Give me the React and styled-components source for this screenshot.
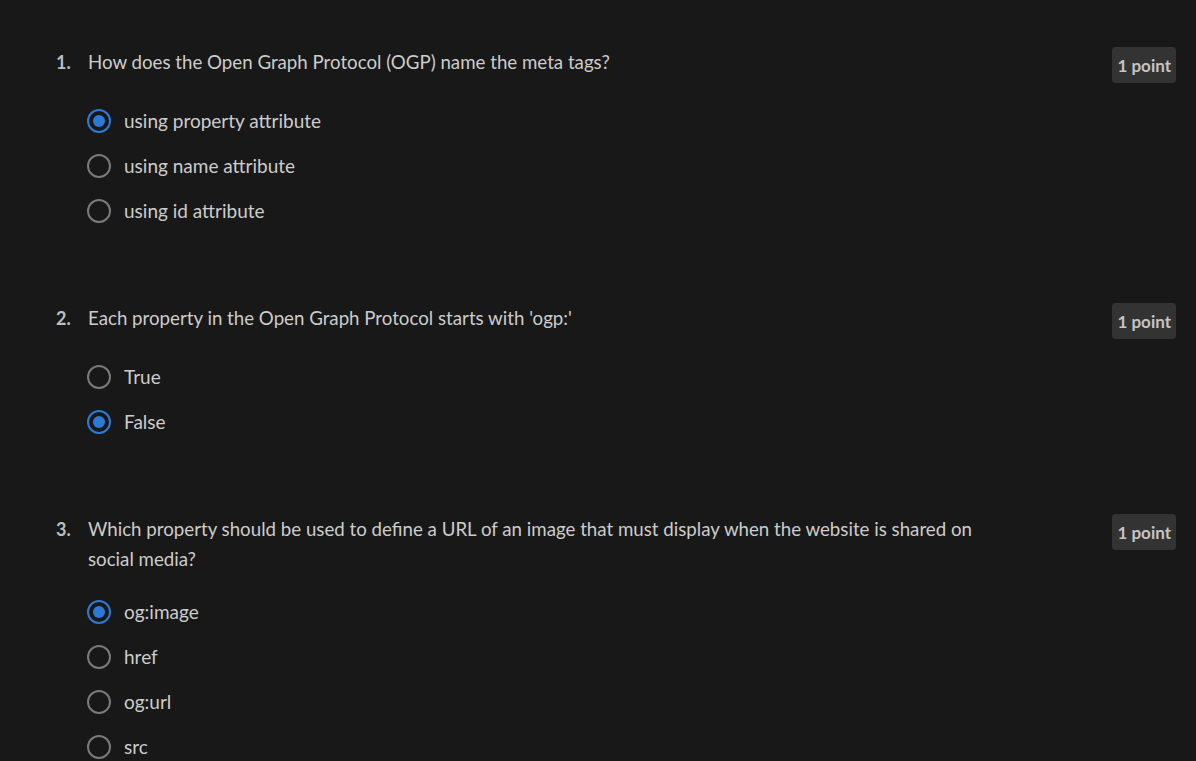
import styled, { createGlobalStyle } from 'styled-components';

const GlobalStyle = createGlobalStyle`
  body {
    margin: 0;
    background: #181818;
    font-family: 'Lato', 'Open Sans', sans-serif;
  }
`;

const StyledPage = styled.main`
  padding: 47px 20px 0 56px;
  display: flex;
  flex-direction: column;
  gap: 70px;
`;
const StyledQuestion = styled.section`
  display: flex;
  align-items: flex-start;
`;
const StyledNumber = styled.div`
  width: 32px;
  flex-shrink: 0;
  font-size: 18px;
  line-height: 30px;
  font-weight: bold;
  color: #bdbdbd;
`;
const StyledBody = styled.div`
  flex: 1;
`;
const StyledPrompt = styled.div`
  max-width: 900px;
  font-size: 18.7px;
  line-height: 30px;
  color: #cccccc;
`;
const StyledOptions = styled.ul`
  list-style: none;
  margin: ${(props) => (props.tight ? '15px' : '21px')} 0 0 -1px;
  padding: 0;
`;
const StyledOption = styled.li`
  display: flex;
  align-items: center;
  gap: 13px;
  height: 45px;
  font-size: 19px;
  color: #cccccc;
`;
const StyledRadio = styled.span`
  box-sizing: border-box;
  width: 24px;
  height: 24px;
  border-radius: 50%;
  border: 2px solid ${(props) => (props.checked ? '#2d7ad6' : '#7a7a7a')};
  display: flex;
  align-items: center;
  justify-content: center;
  &::after {
    content: '';
    display: ${(props) => (props.checked ? 'block' : 'none')};
    width: 12px;
    height: 12px;
    border-radius: 50%;
    background: #2d7ad6;
  }
`;
const StyledBadge = styled.div`
  flex-shrink: 0;
  height: 36px;
  padding: 0 5px;
  display: flex;
  align-items: center;
  border-radius: 4px;
  background: #333333;
  color: #c4c4c4;
  font-size: 17px;
  font-weight: bold;
`;

const questions = [
  {
    prompt: 'How does the Open Graph Protocol (OGP) name the meta tags?',
    options: ['using property attribute', 'using name attribute', 'using id attribute'],
    answer: 0,
  },
  {
    prompt: "Each property in the Open Graph Protocol starts with 'ogp:'",
    options: ['True', 'False'],
    answer: 1,
  },
  {
    prompt:
      'Which property should be used to define a URL of an image that must display when the website is shared on social media?',
    options: ['og:image', 'href', 'og:url', 'src'],
    answer: 0,
    tight: true,
  },
];

export default function App() {
  return (
    <>
      <GlobalStyle />
      <StyledPage>
        {questions.map((q, i) => (
          <StyledQuestion key={i}>
            <StyledNumber>{i + 1}.</StyledNumber>
            <StyledBody>
              <StyledPrompt>{q.prompt}</StyledPrompt>
              <StyledOptions tight={q.tight}>
                {q.options.map((opt, j) => (
                  <StyledOption key={opt}>
                    <StyledRadio checked={j === q.answer} />
                    {opt}
                  </StyledOption>
                ))}
              </StyledOptions>
            </StyledBody>
            <StyledBadge>1 point</StyledBadge>
          </StyledQuestion>
        ))}
      </StyledPage>
    </>
  );
}
